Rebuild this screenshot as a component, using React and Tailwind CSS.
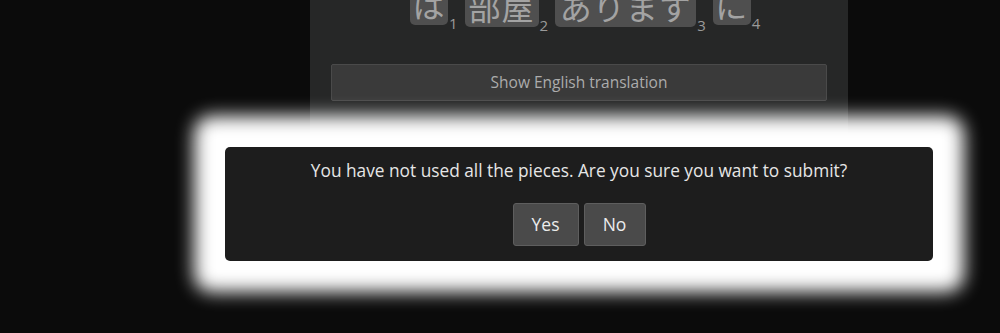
export default function App() {
  const pieces = [
    { text: 'は', box: 'w-[38px] h-[37px]', n: 1 },
    { text: '部屋', box: 'w-[74px] h-[39px]', n: 2 },
    { text: 'あります', box: 'w-[141px] h-[39px]', n: 3 },
    { text: 'に', box: 'w-[38px] h-[37px]', n: 4 },
  ];

  return (
    <div className="relative h-[333px] w-full overflow-hidden bg-[#0b0b0b] font-['Open_Sans',sans-serif]">
      {/* 問題パネル */}
      <div className="ml-[310px] w-[538px] bg-[#262727] pb-[100px]">
        <div className="-mt-[12px] flex items-start pl-[100px]">
          {pieces.map((p) => (
            <div key={p.n} className="mr-[7px] flex items-end">
              <div
                className={`${p.box} flex items-end justify-center rounded-[5px] bg-[#4f4f4f] pb-[5px] font-['Noto_Sans_CJK_JP',sans-serif] text-[32px] leading-[32px] tracking-[1px] text-[#a3a3a3]`}
              >
                {p.text}
              </div>
              <span className="-mb-[6px] ml-[1px] text-[15px] leading-[15px] text-[#9a9a9a]">{p.n}</span>
            </div>
          ))}
        </div>
        <div className="px-[21px] pt-[37px]">
          <button className="h-[37px] w-full rounded-[2px] border border-[#4a4a4a] bg-[#3a3a3a] text-[15.5px] text-[#acacac]">
            Show English translation
          </button>
        </div>
      </div>

      {/* 確認ダイアログ */}
      <div className="absolute left-[225px] top-[147px] flex h-[114px] w-[708px] flex-col items-center rounded-[5px] bg-[#1d1d1d] pt-[12px] shadow-[0_0_18px_31px_#ffffff]">
        <p className="text-[17.3px] leading-[24px] text-[#e6e6e6]">
          You have not used all the pieces. Are you sure you want to submit?
        </p>
        <div className="mt-[20px] flex gap-[5px]">
          <button className="h-[43px] w-[66px] rounded-[3px] border border-[#5e5e5e] bg-[#4a4a4a] text-[17.5px] text-[#ececec]">
            Yes
          </button>
          <button className="h-[43px] w-[62px] rounded-[3px] border border-[#5e5e5e] bg-[#4a4a4a] text-[17.5px] text-[#ececec]">
            No
          </button>
        </div>
      </div>
    </div>
  );
}
